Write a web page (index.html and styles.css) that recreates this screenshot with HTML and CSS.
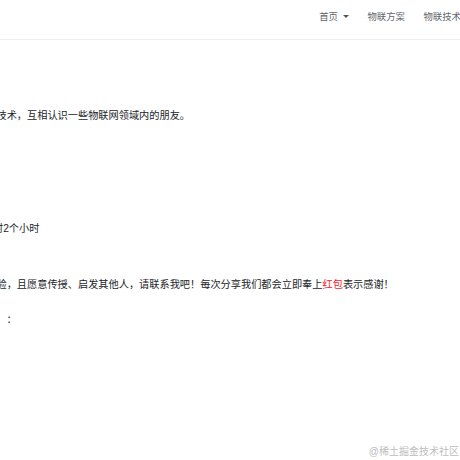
FILE: index.html
```html
<!DOCTYPE html>
<html lang="zh">
<head>
    <meta charset="UTF-8">
    <title>物联网</title>
    <link rel="stylesheet" href="styles.css">
</head>
<body>
    <header class="header">
        <nav class="nav">
            <a class="nav-link">首页<span class="caret"></span></a>
            <a class="nav-link">物联方案</a>
            <a class="nav-link">物联技术</a>
        </nav>
    </header>
    <main class="content">
        <p class="line intro">技术，互相认识一些物联网领域内的朋友。</p>
        <p class="line time">时2个小时</p>
        <p class="line invite">验，且愿意传授、启发其他人，请联系我吧！每次分享我们都会立即奉上<span class="red">红包</span>表示感谢！</p>
        <p class="line contact">：</p>
    </main>
    <div class="watermark">@稀土掘金技术社区</div>
</body>
</html>
```

FILE: styles.css
```css
html, body {
    height: 100%;
}
body {
    margin: 0;
    overflow: hidden;
    background-color: #fff;
    color: #212529;
    font-family: "Liberation Sans", "Noto Sans CJK SC", sans-serif;
    font-size: 10.2px;
}
.header {
    display: flex;
    justify-content: flex-end;
    height: 33px;
    padding-bottom: 6px;
    border-bottom: 1px solid #efefef;
}
.nav {
    display: flex;
    align-items: center;
    gap: 18.5px;
    margin-right: -1px;
    color: #5f666d;
    font-size: 9.4px;
}
.nav-link {
    display: flex;
    align-items: center;
    line-height: 15px;
}
.caret {
    width: 0;
    height: 0;
    margin-left: 5px;
    border-top: 3px solid #555;
    border-left: 3px solid transparent;
    border-right: 3px solid transparent;
}
.content {
    padding-top: 68px;
    margin-left: -3.5px;
}
.line {
    margin: 0;
    line-height: 16px;
    white-space: nowrap;
}
.intro {
    margin-bottom: 97px;
}
.time {
    margin-left: -3.5px;
    margin-bottom: 40px;
}
.invite {
    margin-bottom: 19px;
}
.contact {
    margin-left: 10px;
}
.red {
    color: #f5222d;
}
.watermark {
    position: absolute;
    right: 1px;
    bottom: 1px;
    color: #bdbdbd;
    font-size: 10px;
    line-height: 14px;
}
```
